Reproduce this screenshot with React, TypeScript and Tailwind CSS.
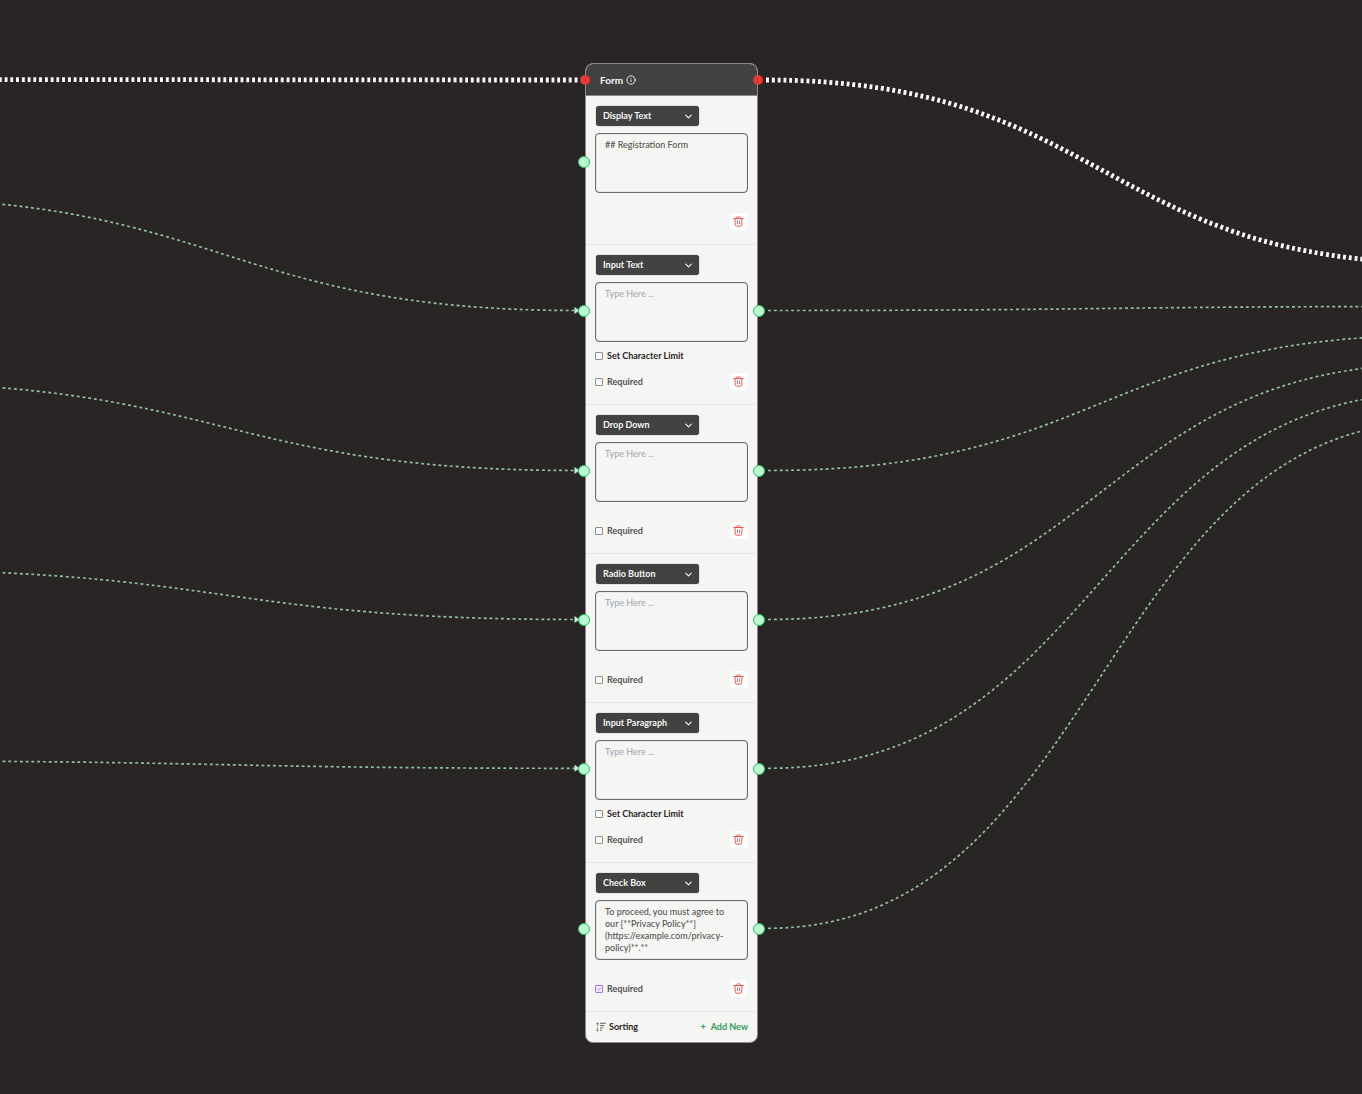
import { useId } from 'react';
import { ChevronDown, Info } from 'lucide-react';
import clsx from 'clsx';

type FieldType =
  | 'Display Text'
  | 'Input Text'
  | 'Drop Down'
  | 'Radio Button'
  | 'Input Paragraph'
  | 'Check Box';

interface FormField {
  type: FieldType;
  text?: string;
  charLimit?: boolean;
  required?: boolean;
  canRequire?: boolean;
  output?: boolean;
}

const FIELD_TYPES: FieldType[] = [
  'Display Text',
  'Input Text',
  'Drop Down',
  'Radio Button',
  'Input Paragraph',
  'Check Box',
];

const fields: FormField[] = [
  { type: 'Display Text', text: '## Registration Form' },
  { type: 'Input Text', charLimit: true, canRequire: true, output: true },
  { type: 'Drop Down', canRequire: true, output: true },
  { type: 'Radio Button', canRequire: true, output: true },
  { type: 'Input Paragraph', charLimit: true, canRequire: true, output: true },
  {
    type: 'Check Box',
    text: 'To proceed, you must agree to our [**Privacy Policy**](https://example.com/privacy-policy)**.**',
    canRequire: true,
    required: true,
    output: true,
  },
];

interface Edge {
  from: [number, number];
  to: [number, number];
  arrow?: boolean;
}

const flowEdges: Edge[] = [
  { from: [-128, 79.5], to: [580, 80] },
  { from: [766, 80], to: [1443, 263] },
];

const dataEdges: Edge[] = [
  { from: [-130, 198], to: [577, 310.5], arrow: true },
  { from: [-130, 383], to: [577, 470.5], arrow: true },
  { from: [-130, 570], to: [577, 619.5], arrow: true },
  { from: [-130, 761], to: [577, 768.3], arrow: true },
  { from: [768, 310.5], to: [1435, 306.5] },
  { from: [768, 470.5], to: [1435, 335.5] },
  { from: [768, 619.5], to: [1435, 364] },
  { from: [768, 768.3], to: [1435, 393] },
  { from: [768, 928.3], to: [1435, 422] },
];

// Horizontal bezier, both control points sit halfway between the handles
function edgePath({ from: [x1, y1], to: [x2, y2] }: Edge) {
  const mid = (x1 + x2) / 2;
  return `M${x1},${y1} C${mid},${y1} ${mid},${y2} ${x2},${y2}`;
}

function Edges() {
  return (
    <svg className="absolute inset-0 h-full w-full" aria-hidden="true">
      {flowEdges.map((edge) => (
        <path
          key={edgePath(edge)}
          d={edgePath(edge)}
          fill="none"
          stroke="#fafaf9"
          strokeWidth="4.8"
          strokeDasharray="2.88"
        />
      ))}
      {dataEdges.map((edge) => (
        <g key={edgePath(edge)}>
          <path
            d={edgePath(edge)}
            fill="none"
            stroke="#94bea5"
            strokeWidth="1.7"
            strokeDasharray="2.88"
          />
          {edge.arrow && (
            <path
              d={`M${edge.to[0] - 2.5},${edge.to[1] - 3.5} l5,3.5 l-5,3.5 z`}
              fill="#bbf7d0"
            />
          )}
        </g>
      ))}
    </svg>
  );
}

function Handle({ side, kind }: { side: 'left' | 'right'; kind: 'flow' | 'data' }) {
  return (
    <span
      className={clsx(
        'absolute rounded-full',
        kind === 'flow' && 'top-[11px] size-[10px] bg-[#e53935]',
        kind === 'data' && 'top-[60px] size-3 border border-[#22c55e] bg-[#bbf7d0]',
        side === 'left' && (kind === 'flow' ? '-left-[6px]' : '-left-2'),
        side === 'right' && (kind === 'flow' ? '-right-[6px]' : '-right-2'),
      )}
    />
  );
}

function TrashIcon() {
  return (
    <svg viewBox="0 0 20 20" className="size-[11px]" fill="none" stroke="#ef5350" strokeLinecap="round" strokeLinejoin="round">
      <path d="M1.5 4.6h17" strokeWidth="2" />
      <path d="M6.5 4.4V3C6.5 2 7 1.5 7.8 1.5h4.4c.8 0 1.3.5 1.3 1.5v1.4" strokeWidth="1.6" />
      <path d="M3.5 5l.7 11c.1 1.6.9 2.5 2.3 2.5h7c1.4 0 2.2-.9 2.3-2.5l.7-11" strokeWidth="1.8" />
      <path d="M8 9v5M12 9v5" strokeWidth="1.7" />
    </svg>
  );
}

function SortIcon() {
  return (
    <svg viewBox="0 0 20 20" className="size-[10px]" fill="none" stroke="#57534e">
      <path d="M3 2v16" strokeWidth="1.3" strokeDasharray="6 2.4" />
      <path d="M.8 4.4L3 1.6l2.2 2.8M.8 15.6L3 18.4l2.2-2.8" strokeWidth="1.6" />
      <path d="M8 2.6h11.5M8 7.2h9M8 11.8h6.5M8 16.4h4" strokeWidth="1.8" />
    </svg>
  );
}

function CheckOption({ label, checked, strong }: { label: string; checked?: boolean; strong?: boolean }) {
  const id = useId();
  return (
    <div className="flex items-center gap-1">
      <span className="relative flex size-2">
        <input
          id={id}
          type="checkbox"
          defaultChecked={checked}
          className="peer size-2 appearance-none rounded-[1px] border border-[#8f8f8f] bg-[#fafaf9] checked:border-[#a47be8] checked:bg-[#f3ebff]"
        />
        <svg viewBox="0 0 8 8" className="pointer-events-none absolute inset-0 hidden size-2 peer-checked:block" fill="none">
          <path d="M2.3 4l1.2 1.3L5.8 2.6" stroke="#a47be8" strokeWidth="0.8" />
        </svg>
      </span>
      <label
        htmlFor={id}
        className={clsx('text-[9px] leading-3 font-bold', strong ? 'text-[#292524]' : 'text-[#57534e]')}
      >
        {label}
      </label>
    </div>
  );
}

function FieldSection({ field }: { field: FormField }) {
  return (
    <section className="relative border-b border-[#e7e6e5] px-[9px] pt-[10px] pb-[14px]">
      <Handle side="left" kind="data" />
      {field.output && <Handle side="right" kind="data" />}

      <div className="relative ml-px w-[103px]">
        <select
          aria-label="Field type"
          defaultValue={field.type}
          className="block h-5 w-full appearance-none rounded-[3px] bg-[#424242] pl-[7px] text-[9px] leading-5 font-bold text-[#f5f5f4] shadow-[0_0_1px_#424242]"
        >
          {FIELD_TYPES.map((type) => (
            <option key={type}>{type}</option>
          ))}
        </select>
        <ChevronDown className="pointer-events-none absolute top-[5px] right-[5px] size-[11px] text-[#f5f5f4]" strokeWidth={2.6} />
      </div>

      <textarea
        aria-label={field.type}
        defaultValue={field.text}
        placeholder="Type Here ..."
        className="mt-[7px] block h-[60px] w-full resize-none overflow-hidden rounded-[4px] border border-[#6b6b6b] px-[9px] py-[5px] text-[9px] leading-3 font-medium text-[#57534e] shadow-[inset_0_0_1px_#6b6b6b] placeholder:text-[#a8abb3]"
      />

      {field.charLimit && (
        <div className="mt-2">
          <CheckOption label="Set Character Limit" strong />
        </div>
      )}

      <div className={clsx('flex items-center justify-between', field.charLimit ? 'mt-[11px]' : 'mt-5')}>
        {field.canRequire ? <CheckOption label="Required" checked={field.required} /> : <span />}
        <button type="button" aria-label="Delete field" className="mr-px flex size-[17px] items-center justify-center rounded-[4px] bg-white">
          <TrashIcon />
        </button>
      </div>
    </section>
  );
}

function FormNode() {
  return (
    <div className="absolute top-[63px] left-[585px] w-[173px] rounded-lg border border-[#8a8a8a] bg-[#f5f5f4]">
      <header className="relative flex h-8 items-center gap-[3px] rounded-t-[7px] border-b border-[#8a8a8a] bg-[#424242] pl-[14px]">
        <Handle side="left" kind="flow" />
        <Handle side="right" kind="flow" />
        <h1 className="text-[10px] leading-3 font-bold text-[#f5f5f4]">Form</h1>
        <Info className="size-[10px] text-[#f5f5f4]" strokeWidth={2.2} />
      </header>

      {fields.map((field) => (
        <FieldSection key={field.type} field={field} />
      ))}

      <footer className="flex h-[30px] items-center justify-between pr-[9px] pl-[10px]">
        <button type="button" className="flex items-center gap-[3px] text-[9px] leading-3 font-bold text-[#292524]">
          <SortIcon />
          Sorting
        </button>
        <button type="button" className="flex items-center gap-[5px] text-[9px] leading-3 font-bold text-[#2e9e5b]">
          <span>+</span>
          Add New
        </button>
      </footer>
    </div>
  );
}

export default function App() {
  return (
    <main className="relative min-h-screen overflow-hidden bg-[#292524] font-['Lato',sans-serif]">
      <Edges />
      <FormNode />
    </main>
  );
}
